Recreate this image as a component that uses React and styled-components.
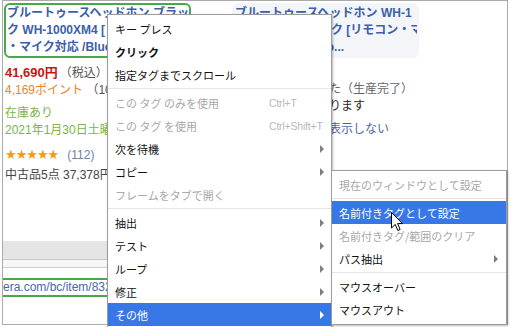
import React from 'react'
import styled, { createGlobalStyle } from 'styled-components'

const GlobalStyle = createGlobalStyle`
  html, body {
    margin: 0;
    padding: 0;
    background: #ffffff;
    overflow: hidden;
  }
`

const JP = `"Liberation Sans", "Noto Sans CJK JP", sans-serif`

const Root = styled.div`
  position: relative;
  width: 510px;
  height: 327px;
  overflow: hidden;
  background: #ffffff;
  font-family: ${JP};
`

const Window = styled.div`
  margin-left: 2px;
  width: 506px;
  height: 325px;
  box-sizing: border-box;
  border: 1px solid #ababab;
  display: flex;
  flex-direction: column;
  overflow: hidden;
`

const Products = styled.div`
  display: grid;
  grid-template-columns: 228px 1fr;
  height: 240px;
  padding: 2px 0 0 1px;
  box-sizing: border-box;
`

const Column = styled.div`
  display: flex;
  flex-direction: column;
  min-width: 0;
`

const TitleBox = styled.div`
  width: 187px;
  box-sizing: border-box;
  border: 2px solid ${p => (p.$active ? '#49a84a' : 'transparent')};
  border-radius: 6px;
  background: ${p => (p.$active ? '#ffffff' : '#f3f5f9')};
  padding: 0 0 0 1px;
  overflow: hidden;
`

const TitleLine = styled.div`
  font-size: 12px;
  font-weight: bold;
  line-height: 17px;
  color: #3c5fa8;
  white-space: nowrap;
`

const Line = styled.div`
  font-size: ${p => p.$size || 12}px;
  font-weight: ${p => (p.$bold ? 'bold' : 'normal')};
  line-height: 17px;
  color: ${p => p.$color || '#333333'};
  margin-top: ${p => p.$mt || 0}px;
  white-space: nowrap;
  padding-left: 1px;
`

const Note = styled.span`
  color: ${p => p.$color || '#555555'};
  font-weight: normal;
  font-size: 12px;
  margin-left: ${p => p.$ml || 0}px;
`

const Stars = styled.span`
  font-family: "DejaVu Sans", sans-serif;
  font-size: 13px;
  color: #f39a12;
  letter-spacing: -1px;
`

const Band = styled.div`
  height: 18px;
  background: #e5e5e5;
  border-bottom: 1px solid #c8c8c8;
  flex: none;
`

const Rule = styled.div`
  height: 7px;
  background: #f7f7f7;
  border-bottom: 1px solid #cdcdcd;
  flex: none;
`

const UrlRow = styled.div`
  margin-top: 10px;
  height: 15px;
  border-top: 2px solid #49a84a;
  border-bottom: 2px solid #49a84a;
  font-family: "Liberation Sans", sans-serif;
  font-size: 12px;
  line-height: 15px;
  color: #4b66a8;
  white-space: nowrap;
  flex: none;
`

const Menu = styled.div`
  position: absolute;
  left: ${p => p.$x}px;
  top: ${p => p.$y}px;
  width: ${p => p.$w}px;
  box-sizing: border-box;
  background: #ffffff;
  border: 1px solid #9c9c9c;
  box-shadow: 1px 1px 2px rgba(0, 0, 0, 0.28);
  padding: 2px 0 3px;
  font-family: "Noto Sans CJK JP", sans-serif;
  font-size: 11px;
`

const Item = styled.div`
  display: grid;
  grid-template-columns: 1fr ${p => p.$side}px;
  align-items: center;
  height: 23px;
  padding: 0 ${p => p.$pr}px 0 7px;
  color: ${p => (p.$active ? '#ffffff' : p.$disabled ? '#a8a8a8' : '#111111')};
  background: ${p => (p.$active ? '#3878e6' : 'transparent')};
  font-weight: ${p => (p.$bold ? 'bold' : 'normal')};
  white-space: nowrap;
`

const Shortcut = styled.span`
  font-family: "Liberation Sans", sans-serif;
  font-size: 10.5px;
  color: #b9b9b9;
  letter-spacing: -0.2px;
`

const Arrow = styled.span`
  justify-self: end;
  width: 0;
  height: 0;
  border-top: 4px solid transparent;
  border-bottom: 4px solid transparent;
  border-left: 4px solid ${p => (p.$active ? '#ffffff' : '#7e7e7e')};
`

const Separator = styled.div`
  height: 1px;
  margin: 2px 0;
  background: #e4e4e4;
`

const Cursor = styled.svg`
  position: absolute;
  left: 391px;
  top: 212px;
`

const mainItems = [
  { label: 'キー プレス' },
  { label: 'クリック', bold: true },
  { label: '指定タグまでスクロール' },
  'sep',
  { label: 'この タグ のみを使用', disabled: true, key: 'Ctrl+T' },
  { label: 'この タグ を使用', disabled: true, key: 'Ctrl+Shift+T' },
  { label: '次を待機', sub: true },
  { label: 'コピー', sub: true },
  { label: 'フレームをタブで開く', disabled: true },
  'sep',
  { label: '抽出', sub: true },
  { label: 'テスト', sub: true },
  { label: 'ループ', sub: true },
  { label: '修正', sub: true },
  { label: 'その他', sub: true, active: true },
]

const subItems = [
  { label: '現在のウィンドウとして設定', disabled: true },
  'sep',
  { label: '名前付きタグとして設定', active: true },
  { label: '名前付きタグ/範囲のクリア', disabled: true },
  { label: 'パス抽出', sub: true },
  'sep',
  { label: 'マウスオーバー' },
  { label: 'マウスアウト' },
]

const MenuList = ({ items, x, y, w, side, pr }) => (
  <Menu $x={x} $y={y} $w={w}>
    {items.map((it, i) =>
      it === 'sep' ? (
        <Separator key={i} />
      ) : (
        <Item
          key={i}
          $side={side}
          $pr={pr}
          $active={it.active}
          $disabled={it.disabled}
          $bold={it.bold}
        >
          <span>{it.label}</span>
          {it.key ? <Shortcut>{it.key}</Shortcut> : it.sub ? <Arrow $active={it.active} /> : <span />}
        </Item>
      )
    )}
  </Menu>
)

const App = () => {
  return (
    <Root>
      <GlobalStyle />
      <Window>
        <Products>
          <Column>
            <TitleBox $active>
              <TitleLine>ブルートゥースヘッドホン ブラッ</TitleLine>
              <TitleLine>ク WH-1000XM4 [リモコン</TitleLine>
              <TitleLine>・マイク対応 /Bluetooth対応]</TitleLine>
            </TitleBox>
            <Line $bold $size={13} $color="#cc1414" $mt={5.5}>
              41,690円<Note $ml={2}>（税込）</Note>
            </Line>
            <Line $color="#e8842a">
              4,169ポイント <Note $color="#555555">（10%還元）</Note>
            </Line>
            <Line $color="#79b548" $mt={6}>在庫あり</Line>
            <Line $color="#79b548">2021年1月30日土曜日お届け</Line>
            <Line $mt={7}>
              <Stars>★★★★★</Stars>
              <Note $color="#6d7fad" $ml={9}>(112)</Note>
            </Line>
            <Line $mt={3} $color="#444444">中古品5点 37,378円〜</Line>
          </Column>
          <Column>
            <TitleBox>
              <TitleLine>ブルートゥースヘッドホン WH-1</TitleLine>
              <TitleLine>000XM4/B ブラック [リモコン・マ</TitleLine>
              <TitleLine>イク対応 /Bluetoo...</TitleLine>
            </TitleBox>
            <Line $mt={22.5} $color="#666666">販売を終了しました（生産完了）</Line>
            <Line $color="#222222">中古品の在庫もあります</Line>
            <Line $mt={6} $color="#4b66a8">この商品を一覧に表示しない</Line>
          </Column>
        </Products>
        <Band />
        <Rule />
        <UrlRow>era.com/bc/item/8322041/</UrlRow>
      </Window>

      <MenuList items={mainItems} x={107} y={14} w={225} side={55} pr={7} />
      <MenuList items={subItems} x={331} y={170} w={176} side={10} pr={8} />

      <Cursor width="13" height="20" viewBox="0 0 13 20">
        <path
          d="M0.5 0.5 L0.5 16 L4.2 12.4 L6.8 18.5 L9.1 17.5 L6.6 11.6 L11.5 11.6 Z"
          fill="#ffffff"
          stroke="#000000"
          strokeWidth="1"
          strokeLinejoin="round"
        />
      </Cursor>
    </Root>
  )
}

export default App
